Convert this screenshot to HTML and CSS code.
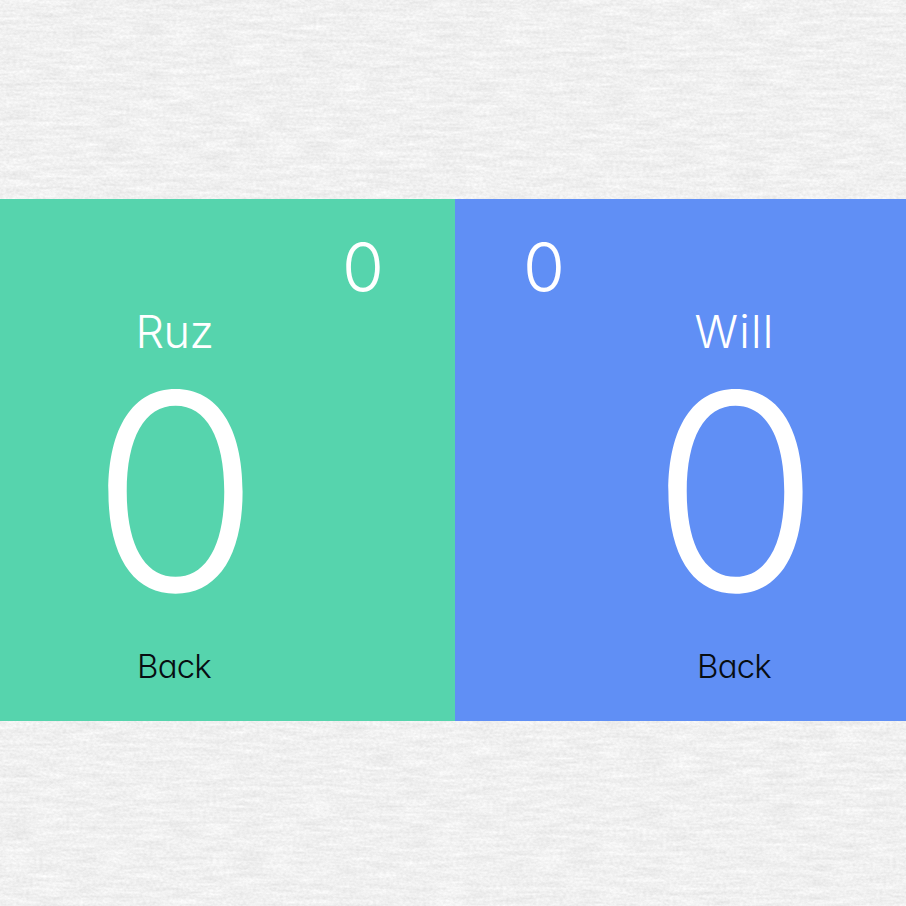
FILE: index.html
```
<!DOCTYPE html>
<html lang="en">
<head>
<meta charset="utf-8">
<title>Scoreboard</title>
<link rel="stylesheet" href="styles.css">
</head>
<body>
<svg class="paper" width="906" height="906" aria-hidden="true">
  <filter id="fibre" x="0" y="0" width="100%" height="100%" color-interpolation-filters="sRGB">
    <feTurbulence type="fractalNoise" baseFrequency="0.03 0.23" numOctaves="2" seed="8"/>
    <feColorMatrix values="0.15 0 0 0 0.867  0.15 0 0 0 0.867  0.15 0 0 0 0.867  0 0 0 0 1"/>
  </filter>
  <filter id="grain" x="0" y="0" width="100%" height="100%" color-interpolation-filters="sRGB">
    <feTurbulence type="fractalNoise" baseFrequency="0.3 0.5" numOctaves="2" seed="3"/>
    <feColorMatrix values="0.24 0 0 0 0.822  0.24 0 0 0 0.822  0.24 0 0 0 0.822  0 0 0 0 0.4"/>
  </filter>
  <rect width="906" height="906" filter="url(#fibre)"/>
  <rect width="906" height="906" filter="url(#grain)"/>
</svg>
<main class="board">
  <section class="player player-green">
    <div class="games">0</div>
    <h2 class="name">Ruz</h2>
    <div class="score">0</div>
    <a class="back">Back</a>
  </section>
  <section class="player player-blue">
    <div class="games">0</div>
    <h2 class="name">Will</h2>
    <div class="score">0</div>
    <a class="back">Back</a>
  </section>
</main>
</body>
</html>
```
FILE: styles.css
```
* {
  box-sizing: border-box;
}

body {
  margin: 0;
  height: 906px;
  padding-top: 199px;
  overflow: hidden;
  background: #f0f0f0;
  font-family: Inter, sans-serif;
  font-weight: 300;
}

.paper {
  position: absolute;
  top: 0;
  left: 0;
  z-index: -1;
}

.board {
  display: grid;
  grid-template-columns: 455px 451px;
  height: 522px;
}

.player {
  display: flex;
  flex-direction: column;
  align-items: center;
  padding-top: 33px;
  color: #fff;
}

.player-green {
  background: #56d4ad;
  padding-right: 104px;
}

.player-blue {
  background: #608ff5;
  padding-left: 110px;
}

.games {
  align-self: flex-end;
  margin-right: -33px;
  font-size: 68px;
  font-weight: 350;
  line-height: 70px;
}

.player-blue .games {
  align-self: flex-start;
  margin: 0 0 0 -42px;
}

.name {
  margin: 0;
  padding-right: 2px;
  font-size: 45px;
  font-weight: 350;
  letter-spacing: -0.5px;
  line-height: 60px;
}

.player-blue .name {
  letter-spacing: 1.2px;
}

.score {
  margin-top: 30px;
  font-size: 274px;
  line-height: 200px;
}

.back {
  margin-top: 54px;
  padding-right: 3px;
  color: #080d12;
  font-feature-settings: "cv11";
  font-size: 33px;
  font-weight: 350;
  letter-spacing: -0.8px;
  line-height: 40px;
}
```
